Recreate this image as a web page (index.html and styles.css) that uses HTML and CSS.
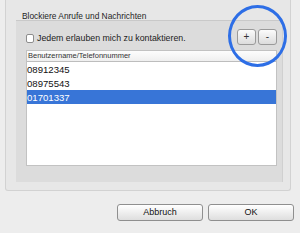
FILE: index.html
```html
<!DOCTYPE html>
<html>
<head>
<meta charset="utf-8">
<link rel="stylesheet" href="styles.css">
</head>
<body>
<div class="window">
  <div class="group">
    <div class="title">Blockiere Anrufe und Nachrichten</div>
    <div class="inner">
      <div class="toprow">
        <label class="check"><span class="box"></span><span class="label">Jedem erlauben mich zu kontaktieren.</span></label>
        <div class="pm">
          <span class="sbtn">+</span>
          <span class="sbtn">-</span>
        </div>
      </div>
      <div class="list">
        <div class="head">Benutzername/Telefonnummer</div>
        <div class="row">08912345</div>
        <div class="row">08975543</div>
        <div class="row sel">01701337</div>
      </div>
    </div>
  </div>
  <div class="actions">
    <span class="btn">Abbruch</span>
    <span class="btn">OK</span>
  </div>
  <div class="ring"></div>
</div>
</body>
</html>
```
FILE: styles.css
```css
html, body {
  margin: 0;
  padding: 0;
}
body {
  width: 300px;
  height: 233px;
  overflow: hidden;
  background: #ededed;
  font-family: "Liberation Sans", Arial, sans-serif;
  color: #222;
}
.window {
  position: relative;
  width: 300px;
  height: 233px;
}
.group {
  margin-left: 5px;
  width: 286px;
  height: 191px;
  background: #e7e7e7;
  border: 1px solid #d2d2d2;
  border-top: none;
  border-radius: 0 0 3px 3px;
  box-sizing: border-box;
  padding-bottom: 10px;
}
.title {
  height: 20px;
  box-sizing: border-box;
  padding-left: 16px;
  padding-top: 11px;
  font-size: 8.4px;
  line-height: 10px;
  color: #1e1e1e;
}
.inner {
  margin-left: 10px;
  width: 267px;
  height: 162px;
  box-sizing: border-box;
  background: #dcdcdc;
  border-top: 1px solid #c9c9c9;
  border-right: 1px solid #d0d0d0;
  padding: 8px 5px 0 10px;
}
.toprow {
  display: flex;
  justify-content: space-between;
  align-items: center;
  height: 16px;
}
.check {
  display: flex;
  align-items: center;
  gap: 3px;
  margin-top: 2px;
}
.box {
  width: 6px;
  height: 7px;
  background: #fff;
  border: 1px solid #8d8d8d;
  border-radius: 2px;
}
.label {
  font-size: 8.8px;
  color: #222;
}
.pm {
  display: flex;
  gap: 2px;
}
.sbtn {
  width: 19px;
  height: 16px;
  box-sizing: border-box;
  border: 1px solid #9a9a9a;
  border-radius: 3px;
  background: linear-gradient(#fbfbfb, #dcdcdc);
  font-size: 10px;
  line-height: 14px;
  text-align: center;
  color: #333;
}
.list {
  margin-top: 5px;
  height: 116px;
  background: #fff;
  border: 1px solid #c2c2c2;
  box-sizing: border-box;
}
.head {
  height: 11px;
  box-sizing: border-box;
  border-bottom: 1px solid #bdbdbd;
  background: linear-gradient(#fdfdfd, #efefef);
  font-size: 7.5px;
  line-height: 10px;
  padding-left: 1px;
  color: #333;
}
.row {
  height: 14px;
  line-height: 15px;
  font-size: 9.6px;
  color: #111;
}
.row.sel {
  background: #3875d7;
  color: #fff;
}
.actions {
  display: flex;
  gap: 5px;
  padding-left: 117px;
  margin-top: 13px;
}
.btn {
  width: 86px;
  height: 17px;
  box-sizing: border-box;
  border: 1px solid #8f8f8f;
  border-radius: 3px;
  background: linear-gradient(#ffffff, #dedede);
  font-size: 9px;
  line-height: 15px;
  text-align: center;
  color: #111;
}
.ring {
  position: absolute;
  left: 228px;
  top: 5px;
  width: 59px;
  height: 62px;
  box-sizing: border-box;
  border: 3px solid #2d6ee6;
  border-radius: 50%;
}
```
